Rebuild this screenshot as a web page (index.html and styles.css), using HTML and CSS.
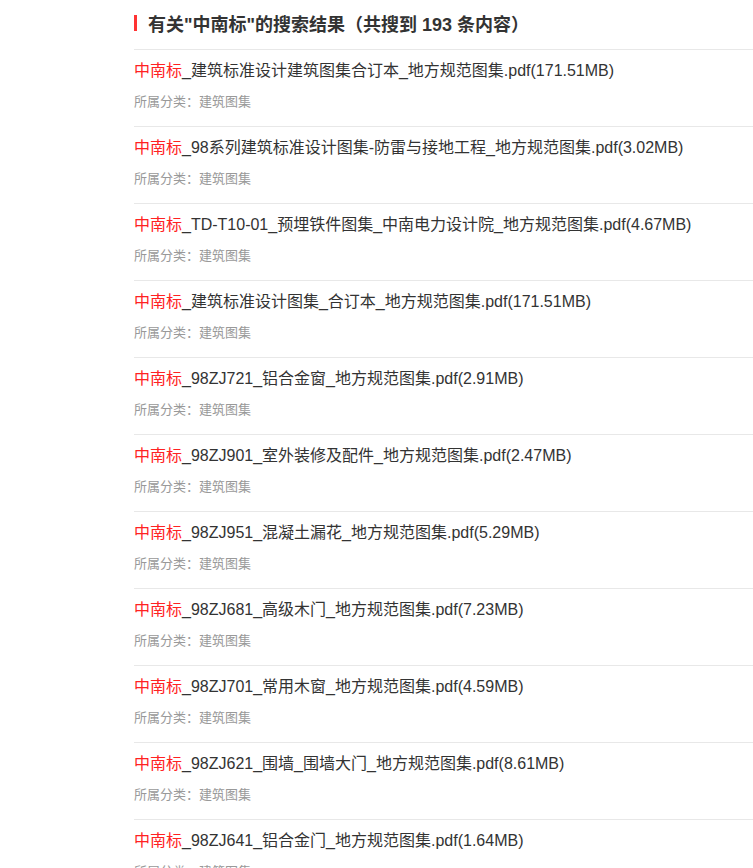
FILE: index.html
```html
<!DOCTYPE html>
<html lang="zh-CN">
<head>
<meta charset="utf-8">
<link rel="stylesheet" href="styles.css">
</head>
<body>
<div class="wrap">
  <h2 class="head"><span class="bar"></span>有关"中南标"的搜索结果（共搜到 193 条内容）</h2>
  <ul class="list">
    <li class="item"><a class="name"><em>中南标</em>_建筑标准设计建筑图集合订本_地方规范图集.pdf(171.51MB)</a><p class="cat">所属分类：建筑图集</p></li>
    <li class="item"><a class="name"><em>中南标</em>_98系列建筑标准设计图集-防雷与接地工程_地方规范图集.pdf(3.02MB)</a><p class="cat">所属分类：建筑图集</p></li>
    <li class="item"><a class="name"><em>中南标</em>_TD-T10-01_预埋铁件图集_中南电力设计院_地方规范图集.pdf(4.67MB)</a><p class="cat">所属分类：建筑图集</p></li>
    <li class="item"><a class="name"><em>中南标</em>_建筑标准设计图集_合订本_地方规范图集.pdf(171.51MB)</a><p class="cat">所属分类：建筑图集</p></li>
    <li class="item"><a class="name"><em>中南标</em>_98ZJ721_铝合金窗_地方规范图集.pdf(2.91MB)</a><p class="cat">所属分类：建筑图集</p></li>
    <li class="item"><a class="name"><em>中南标</em>_98ZJ901_室外装修及配件_地方规范图集.pdf(2.47MB)</a><p class="cat">所属分类：建筑图集</p></li>
    <li class="item"><a class="name"><em>中南标</em>_98ZJ951_混凝土漏花_地方规范图集.pdf(5.29MB)</a><p class="cat">所属分类：建筑图集</p></li>
    <li class="item"><a class="name"><em>中南标</em>_98ZJ681_高级木门_地方规范图集.pdf(7.23MB)</a><p class="cat">所属分类：建筑图集</p></li>
    <li class="item"><a class="name"><em>中南标</em>_98ZJ701_常用木窗_地方规范图集.pdf(4.59MB)</a><p class="cat">所属分类：建筑图集</p></li>
    <li class="item"><a class="name"><em>中南标</em>_98ZJ621_围墙_围墙大门_地方规范图集.pdf(8.61MB)</a><p class="cat">所属分类：建筑图集</p></li>
    <li class="item"><a class="name"><em>中南标</em>_98ZJ641_铝合金门_地方规范图集.pdf(1.64MB)</a><p class="cat">所属分类：建筑图集</p></li>
  </ul>
</div>
</body>
</html>
```
FILE: styles.css
```css
html, body {
  margin: 0;
  padding: 0;
  background: #fff;
  overflow: hidden;
}
body {
  font-family: "Liberation Sans", "Noto Sans CJK SC", sans-serif;
  color: #333;
}
.wrap {
  margin-left: 134px;
  width: 640px;
}
.head {
  display: flex;
  align-items: center;
  margin: 0;
  height: 45px;
  padding-bottom: 4px;
  font-size: 18px;
  font-weight: bold;
  color: #333;
}
.bar {
  display: inline-block;
  width: 3px;
  height: 16px;
  background: #f33;
  margin-right: 11px;
}
.list {
  list-style: none;
  margin: 0;
  padding: 0;
}
.item {
  border-top: 1px solid #e8e8e8;
  padding: 12px 0 16px;
  height: 48px;
}
.name {
  display: block;
  font-size: 16px;
  line-height: 18px;
  color: #333;
}
.name em {
  font-style: normal;
  color: #f22;
}
.cat {
  margin: 13px 0 0;
  font-size: 13px;
  line-height: 17px;
  color: #999;
}
```
